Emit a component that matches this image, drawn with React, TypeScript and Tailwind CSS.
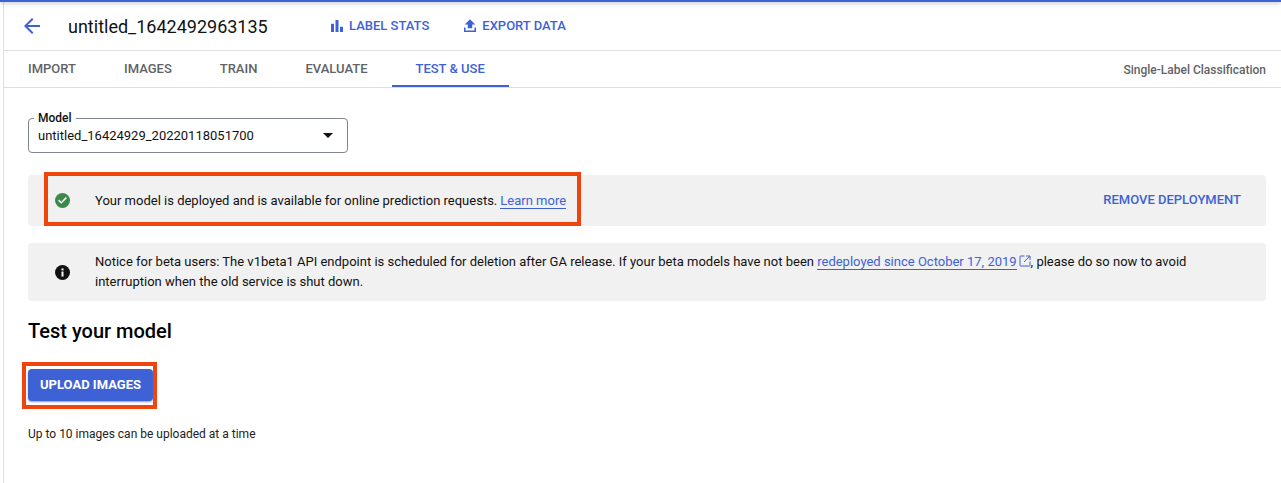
import React from "react";

const Tab = ({ label, active }: { label: string; active?: boolean }) => (
  <div className={`flex h-full items-center justify-center text-[13px] font-medium ${active ? "ml-[1px] border-b-2 border-[#3e62d6] pl-[23px] pr-6 pt-[2px] text-[#3e62d6]" : "px-6 text-[#5f6368]"}`}>
    {label}
  </div>
);

export default function App() {
  return (
    <div className="relative h-[483px] w-full overflow-hidden bg-white font-['Roboto',sans-serif] text-[#111]">
      <div className="relative z-10 h-[2px] bg-[#3e62d6] shadow-[0_1px_4px_rgba(0,0,0,0.35)]" />
      <div className="ml-[3px] h-[481px] border-l border-[#dfdfdf]">
        <div className="flex h-[49px] items-center border-b border-[#dfdfdf]">
          <svg className="ml-[16px] h-[24px] w-[24px]" viewBox="0 0 24 24" fill="#3e62d6">
            <path d="M20 11H7.83l5.59-5.59L12 4l-8 8 8 8 1.41-1.41L7.83 13H20v-2z" />
          </svg>
          <div className="ml-[24px] w-[200px] text-[18px] whitespace-nowrap">untitled_1642492963135</div>
          <div className="ml-[60px] flex items-center text-[13px] font-medium text-[#3e62d6]">
            <svg className="h-[18px] w-[18px]" viewBox="0 0 24 24" fill="#3e62d6">
              <path d="M4 9h4v11H4zm12 4h4v7h-4zm-6-9h4v16h-4z" />
            </svg>
            <span className="ml-[3px]">LABEL STATS</span>
          </div>
          <div className="ml-[32px] flex items-center text-[13px] font-medium text-[#3e62d6]">
            <svg className="h-[18px] w-[18px]" viewBox="0 0 24 24" fill="#3e62d6">
              <path d="M9 15h6v-5h4l-7-7-7 7h4zM4 14h2v4h12v-4h2v6H4z" />
            </svg>
            <span className="ml-[3px]">EXPORT DATA</span>
          </div>
        </div>
        <div className="flex h-[37px] items-center border-b border-[#dfdfdf]">
          <Tab label="IMPORT" />
          <Tab label="IMAGES" />
          <Tab label="TRAIN" />
          <Tab label="EVALUATE" />
          <Tab label="TEST & USE" active />
          <div className="ml-auto pr-[15px] pt-[1px] text-[12px] font-medium text-[#5f6368]">Single-Label Classification</div>
        </div>
        <div className="pl-[24px] pr-[15px]">
          <div className="relative mt-[30px] flex h-[35px] w-[320px] items-center justify-between rounded border border-[#80868b] pl-[9px] pr-[14px] text-[13px]">
            <span className="absolute -top-[8px] left-[5px] bg-white px-[4px] text-[12px] font-medium leading-[14px]">Model</span>
            <span>untitled_16424929_20220118051700</span>
            <span className="h-0 w-0 border-x-[5px] border-t-[5px] border-x-transparent border-t-[#111]" />
          </div>
          <div className="mt-[22px] flex h-[51px] items-center rounded bg-[#f1f1f1] pl-[27px] pr-[25px] text-[13px]">
            <svg className="h-[15px] w-[15px] shrink-0" viewBox="0 0 24 24">
              <circle cx="12" cy="12" r="12" fill="#3c8a4a" />
              <path d="M10 17.2l-5-5 1.7-1.7 3.3 3.3 7.3-7.3 1.7 1.7z" fill="#fff" />
            </svg>
            <span className="ml-[25px]">Your model is deployed and is available for online prediction requests.</span>
            <span className="ml-[3px] border-b border-[#3e62d6] leading-[15px] text-[#3e62d6]">Learn more</span>
            <span className="ml-auto pb-[2px] text-[13px] font-medium text-[#3e62d6]">REMOVE DEPLOYMENT</span>
          </div>
          <div className="mt-[17px] flex h-[58px] items-center rounded bg-[#f1f1f1] pl-[27px] pr-[25px] text-[13px] leading-[20px]">
            <svg className="h-[15px] w-[15px] shrink-0" viewBox="0 0 24 24">
              <circle cx="12" cy="12" r="12" fill="#111" />
              <rect x="10.4" y="10.5" width="3.2" height="8" fill="#fff" />
              <rect x="10.4" y="5.5" width="3.2" height="3.2" fill="#fff" />
            </svg>
            <div className="ml-[25px]">
              Notice for beta users: The v1beta1 API endpoint is scheduled for deletion after GA release. If your beta models have not been{" "}
              <span className="border-b border-[#3e62d6] text-[#3e62d6]">redeployed since October 17, 2019</span>
              <svg className="ml-[2px] inline h-[12px] w-[12px] align-[-1px]" viewBox="0 0 12 12" fill="none" stroke="#3e62d6" strokeWidth="1">
                <path d="M5.5 1H1.5a.5.5 0 0 0-.5.5v9a.5.5 0 0 0 .5.5h9a.5.5 0 0 0 .5-.5V6.5M7 1h4v4M11 1L5 7" />
              </svg>
              , please do so now to avoid
              <br />
              interruption when the old service is shut down.
            </div>
          </div>
          <div className="mt-[18px] text-[20px] font-medium leading-[24px] text-black">Test your model</div>
          <div className="mt-[26px] flex h-[32px] w-[125px] items-center justify-center rounded bg-[#3e62d6] text-[13px] font-bold text-white shadow-[0_1px_2px_rgba(0,0,0,0.4)]">
            UPLOAD IMAGES
          </div>
          <div className="mt-[25px] text-[12px] leading-[16px] text-[#222]">Up to 10 images can be uploaded at a time</div>
        </div>
      </div>
      <div className="absolute left-[44px] top-[172px] h-[54px] w-[537px] border-[4px] border-[#f0440f]" />
      <div className="absolute left-[22px] top-[362px] h-[47px] w-[135px] border-[4px] border-[#f0440f]" />
    </div>
  );
}
